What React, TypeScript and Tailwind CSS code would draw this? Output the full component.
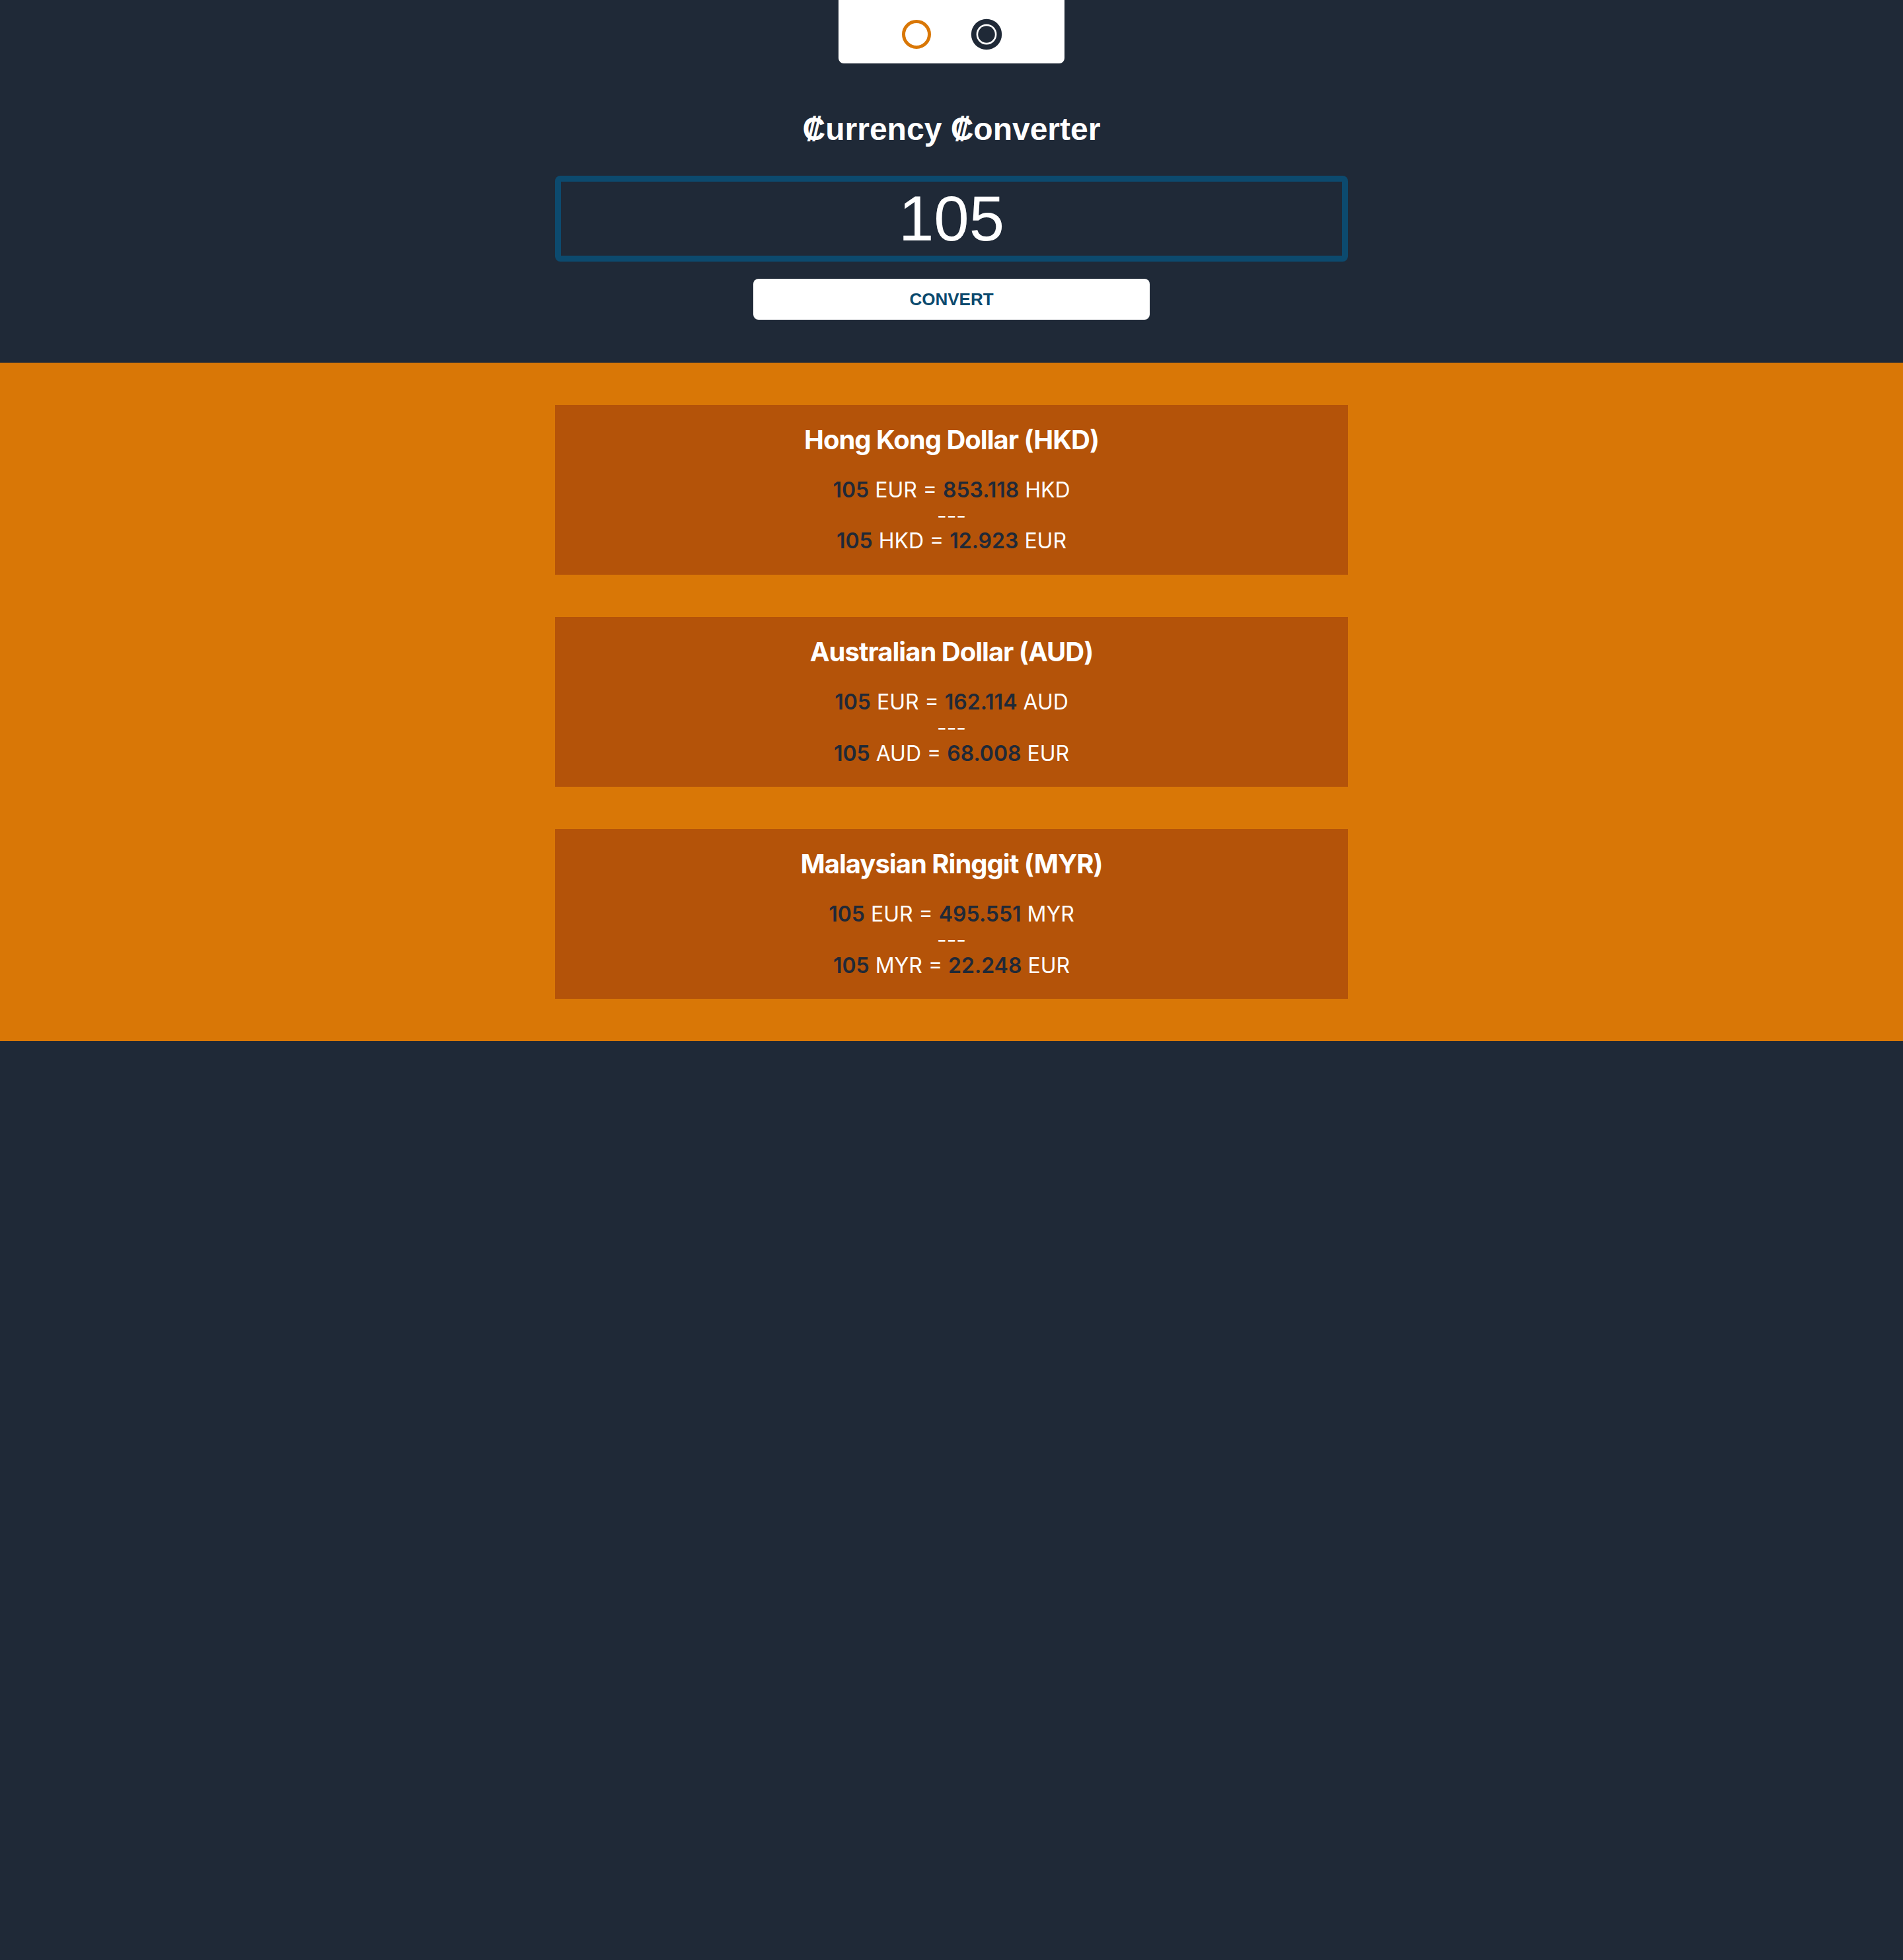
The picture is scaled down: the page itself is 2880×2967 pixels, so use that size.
import { useState } from "react";

const rates = [
  { id: 1, name: "Hong Kong Dollar", code: "HKD", to: "853.118", from: "12.923" },
  { id: 2, name: "Australian Dollar", code: "AUD", to: "162.114", from: "68.008" },
  { id: 3, name: "Malaysian Ringgit", code: "MYR", to: "495.551", from: "22.248" },
];

function ThemeToggle() {
  return (
    <div className="mx-auto flex w-[342px] items-center justify-center gap-[58px] rounded-b-lg bg-white pt-7 pb-5">
      <svg width="48" height="48" viewBox="0 0 24 24">
        <circle cx="12" cy="12" r="9.75" fill="none" stroke="#d97706" strokeWidth="2.5" />
      </svg>
      <svg width="48" height="48" viewBox="0 0 24 24">
        <circle cx="12" cy="12" r="11.6" fill="#1f2937" />
        <circle cx="12" cy="12" r="7.7" fill="#ffffff" />
        <circle cx="12" cy="12" r="6.4" fill="#1f2937" />
      </svg>
    </div>
  );
}

function RateCard({ rate, amount }: { rate: (typeof rates)[number]; amount: string }) {
  return (
    <div className="bg-[#b45309] pt-[25px] pb-[31px] text-center font-['Inter',sans-serif] text-white">
      <h3 className="text-[40px] leading-[56px] font-bold tracking-tight">
        {rate.name} ({rate.code})
      </h3>
      <div className="mt-[29px] text-[32px] leading-[1.21]">
        <p>
          <span className="font-semibold text-[#1f2937]">{amount}</span> EUR ={" "}
          <span className="font-semibold text-[#1f2937]">{rate.to}</span> {rate.code}
        </p>
        <p>---</p>
        <p>
          <span className="font-semibold text-[#1f2937]">{amount}</span> {rate.code} ={" "}
          <span className="font-semibold text-[#1f2937]">{rate.from}</span> EUR
        </p>
      </div>
    </div>
  );
}

export default function App() {
  const [amount, setAmount] = useState("105");

  return (
    <div className="min-h-screen bg-[#1f2937] font-['Liberation_Sans','DejaVu_Sans',Arial,sans-serif]">
      <div className="pb-[65px]">
        <ThemeToggle />
        <h1 className="mt-[68px] text-center text-5xl leading-[64px] font-bold text-white">
          ₡urrency ₡onverter
        </h1>
        <div className="mx-auto mt-[38px] w-[1200px]">
          <input
            type="text"
            value={amount}
            onChange={(e) => setAmount(e.target.value)}
            className="block h-[130px] w-full rounded-lg border-[9px] border-[#0c4a6e] bg-transparent text-center text-8xl leading-none text-white outline-none"
          />
          <button className="mx-auto mt-[26px] block h-[62px] w-[600px] rounded-lg bg-white text-[26px] font-bold text-[#0c4a6e]">
            CONVERT
          </button>
        </div>
      </div>

      <div className="bg-[#d97706] py-16">
        <div className="mx-auto flex w-[1200px] flex-col gap-16">
          {rates.map((rate) => (
            <RateCard key={rate.id} rate={rate} amount={amount} />
          ))}
        </div>
      </div>
    </div>
  );
}
